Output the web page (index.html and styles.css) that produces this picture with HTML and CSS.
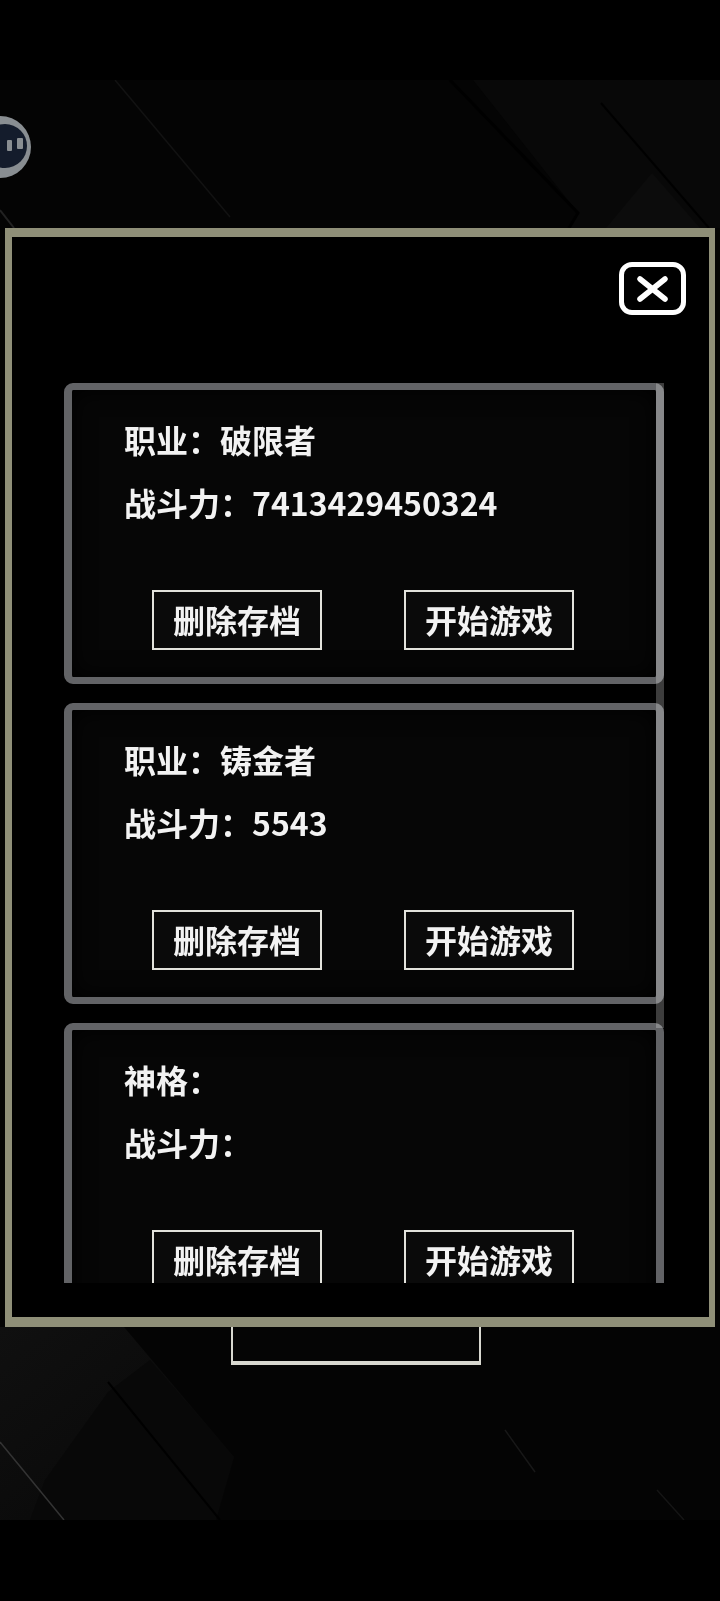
FILE: index.html
```html
<!DOCTYPE html>
<html lang="zh-CN">
<head>
  <meta charset="UTF-8" />
  <meta name="viewport" content="width=device-width, initial-scale=1.0" />
  <title>存档</title>
  <link rel="stylesheet" href="styles.css">
</head>
<body>
  <div class="pantalla">
    <!-- fondo -->
    <svg class="fondo" width="720" height="1440" viewBox="0 80 720 1440">
      <defs>
        <linearGradient id="sombra" x1="0" y1="0" x2="1" y2="1">
          <stop offset="0" stop-color="#101010" />
          <stop offset="1" stop-color="#070707" />
        </linearGradient>
      </defs>
      <polygon points="473,80 720,80 720,228 569,228 578,213" fill="#080808" />
      <polygon points="652,173 700,228 606,228" fill="#0c0c0c" />
      <polygon points="0,1327 124,1327 234,1457 216,1520 0,1520" fill="url(#sombra)" />
      <polygon points="108,1392 45,1480 30,1520 216,1520 234,1457 150,1360" fill="#080808" />
      <g fill="none">
        <line x1="115" y1="80" x2="230" y2="217" stroke="#121212" stroke-width="1.5" />
        <polyline points="450,80 578,213 569,228" stroke="#000" stroke-width="3" />
        <line x1="601" y1="103" x2="709" y2="228" stroke="#000" stroke-width="2" />
        <line x1="0" y1="210" x2="14" y2="228" stroke="#222" stroke-width="2" />
        <line x1="108" y1="1382" x2="220" y2="1520" stroke="#000" stroke-width="2" />
        <line x1="0" y1="1442" x2="64" y2="1520" stroke="#333" stroke-width="1.5" />
        <line x1="505" y1="1430" x2="535" y2="1472" stroke="#181818" stroke-width="1.5" />
        <line x1="657" y1="1490" x2="684" y2="1520" stroke="#151515" stroke-width="1.5" />
      </g>
    </svg>

    <svg class="flotante" width="32" height="64" viewBox="0 0 32 64">
      <circle cx="0" cy="32" r="31" fill="#898e92" />
      <circle cx="5" cy="31" r="22" fill="#141c2c" />
      <rect x="7" y="25" width="5" height="11" rx="1" fill="#898e92" />
      <rect x="17" y="23" width="6" height="11" rx="1" fill="#898e92" />
    </svg>

    <div class="caja-atras"></div>

    <div class="panel">
      <button class="cerrar">
        <svg width="31" height="26" viewBox="0 0 31 26">
          <path d="M3 3 L28 23 M28 3 L3 23" stroke="#fff" stroke-width="5.5" stroke-linecap="round" />
        </svg>
      </button>

      <div class="lista">
        <div class="tarjeta">
          <div class="linea">职业&#xFF1A;破限者</div>
          <div class="linea">战斗力&#xFF1A;7413429450324</div>
          <div class="botones">
            <button class="boton">删除存档</button>
            <button class="boton">开始游戏</button>
          </div>
        </div>
        <div class="tarjeta">
          <div class="linea">职业&#xFF1A;铸金者</div>
          <div class="linea">战斗力&#xFF1A;5543</div>
          <div class="botones">
            <button class="boton">删除存档</button>
            <button class="boton">开始游戏</button>
          </div>
        </div>
        <div class="tarjeta">
          <div class="linea">神格&#xFF1A;</div>
          <div class="linea">战斗力&#xFF1A;</div>
          <div class="botones">
            <button class="boton">删除存档</button>
            <button class="boton">开始游戏</button>
          </div>
        </div>
        <div class="barra"></div>
      </div>
    </div>
  </div>
</body>
</html>
```

FILE: styles.css
```css
body {
  margin: 0;
  background: #000;
  font-family: "Noto Sans CJK SC", "Noto Sans", sans-serif;
}

.pantalla {
  position: relative;
  width: 720px;
  height: 1601px;
  overflow: hidden;
  background: #000;
}

.fondo {
  position: absolute;
  left: 0;
  top: 80px;
  background: #040404;
}

.flotante {
  position: absolute;
  left: 0;
  top: 115px;
}

.caja-atras {
  position: absolute;
  left: 231px;
  top: 1320px;
  width: 250px;
  height: 45px;
  box-sizing: border-box;
  border: 2px solid #d8d8d0;
  border-bottom-width: 4px;
  background: #050505;
}

.panel {
  position: absolute;
  left: 5px;
  top: 228px;
  width: 710px;
  height: 1099px;
  box-sizing: border-box;
  border: solid #8f8f78;
  border-width: 9px 6px 10px 7px;
  background: #000;
  padding-top: 25px;
}

.cerrar {
  display: flex;
  align-items: center;
  justify-content: center;
  width: 67px;
  height: 53px;
  margin: 0 23px 68px auto;
  padding: 0;
  box-sizing: border-box;
  background: #000;
  border: 5px solid #fff;
  border-radius: 13px;
}

.lista {
  position: relative;
  display: flex;
  flex-direction: column;
  gap: 19px;
  width: 600px;
  height: 900px;
  margin-left: 52px;
  overflow: hidden;
  filter: blur(0.4px);
}

.tarjeta {
  flex: none;
  height: 301px;
  box-sizing: border-box;
  padding: 18px 0 0 52px;
  border: solid #626366;
  border-width: 7px 8px;
  border-radius: 9px;
  background: #060606;
  box-shadow: inset 0 0 22px #000;
}

.tarjeta:last-of-type {
  border-color: #626366 #3b3e41 #3b3e41 #4b4f53;
}

.linea {
  height: 63px;
  line-height: 63px;
  font-size: 32px;
  font-weight: 700;
  color: #f2f2f2;
  white-space: nowrap;
}

.botones {
  display: flex;
  gap: 82px;
  margin: 56px 0 0 28px;
}

.boton {
  width: 170px;
  height: 60px;
  padding: 0 0 2px;
  box-sizing: border-box;
  background: #0a0a0a;
  border: 2px solid #e2e2dc;
  color: #f2f2f2;
  font-family: inherit;
  font-size: 32px;
  font-weight: 700;
  line-height: 54px;
}

.barra {
  position: absolute;
  right: 0;
  top: 0;
  width: 8px;
  height: 645px;
  background: rgba(255, 255, 255, 0.24);
}
```
